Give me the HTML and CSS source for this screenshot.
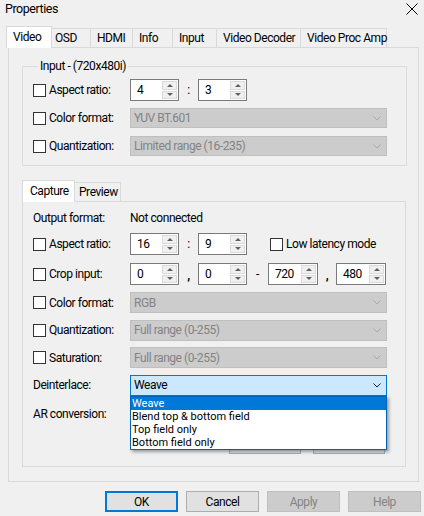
FILE: index.html
```html
<!DOCTYPE html>
<html>
<head>
<meta charset="utf-8">
<link rel="stylesheet" href="styles.css">
</head>
<body>
<div class="titlebar">
  <span class="title">Properties</span>
  <svg class="close" viewBox="0 0 12 12"><path d="M0.5 0.5L11.5 11.5M11.5 0.5L0.5 11.5" stroke="#000" stroke-width="1"/></svg>
</div>
<div class="tabs outer-tabs">
  <div class="tab sel w-video">Video</div>
  <div class="tab w-osd">OSD</div>
  <div class="tab w-hdmi">HDMI</div>
  <div class="tab w-info">Info</div>
  <div class="tab w-input">Input</div>
  <div class="tab w-vd">Video Decoder</div>
  <div class="tab w-vpa">Video Proc Amp</div>
</div>
<div class="page">
  <fieldset class="group">
    <legend>Input - (720x480i)</legend>
    <div class="row h22">
      <div class="lab"><span class="cb"></span>Aspect ratio:</div>
      <div class="spin"><span class="val">4</span><span class="ud"><i class="up"></i><i class="dn"></i></span></div>
      <span class="sep s19">:</span>
      <div class="spin"><span class="val">3</span><span class="ud"><i class="up"></i><i class="dn"></i></span></div>
    </div>
    <div class="row h20 mt7">
      <div class="lab"><span class="cb"></span>Color format:</div>
      <div class="combo dis h20"><span>YUV BT.601</span><svg class="chev" viewBox="0 0 8 5"><path d="M0.5 0.5L4 4L7.5 0.5" fill="none" stroke="#a8a8a8"/></svg></div>
    </div>
    <div class="row h20 mt8">
      <div class="lab"><span class="cb"></span>Quantization:</div>
      <div class="combo dis h20"><span>Limited range (16-235)</span><svg class="chev" viewBox="0 0 8 5"><path d="M0.5 0.5L4 4L7.5 0.5" fill="none" stroke="#a8a8a8"/></svg></div>
    </div>
  </fieldset>

  <div class="inner">
    <div class="tabs inner-tabs">
      <div class="tab sel w-cap">Capture</div>
      <div class="tab w-prev">Preview</div>
    </div>
    <div class="sub">
      <div class="row h14">
        <div class="lab nocb">Output format:</div>
        <span>Not connected</span>
      </div>
      <div class="row h22 mt8">
        <div class="lab"><span class="cb"></span>Aspect ratio:</div>
        <div class="spin"><span class="val">16</span><span class="ud"><i class="up"></i><i class="dn"></i></span></div>
        <span class="sep s19">:</span>
        <div class="spin"><span class="val">9</span><span class="ud"><i class="up"></i><i class="dn"></i></span></div>
        <div class="lab lowlat"><span class="cb"></span>Low latency mode</div>
      </div>
      <div class="row h22 mt8">
        <div class="lab"><span class="cb"></span>Crop input:</div>
        <div class="spin"><span class="val">0</span><span class="ud"><i class="up"></i><i class="dn"></i></span></div>
        <span class="sep s19 comma">,</span>
        <div class="spin"><span class="val">0</span><span class="ud"><i class="up"></i><i class="dn"></i></span></div>
        <span class="sep s21">-</span>
        <div class="spin w50"><span class="val">720</span><span class="ud"><i class="up"></i><i class="dn"></i></span></div>
        <span class="sep s18 comma">,</span>
        <div class="spin w50"><span class="val">480</span><span class="ud"><i class="up"></i><i class="dn"></i></span></div>
      </div>
      <div class="row h21 mt7">
        <div class="lab"><span class="cb"></span>Color format:</div>
        <div class="combo dis"><span>RGB</span><svg class="chev" viewBox="0 0 8 5"><path d="M0.5 0.5L4 4L7.5 0.5" fill="none" stroke="#a8a8a8"/></svg></div>
      </div>
      <div class="row h21 mt67">
        <div class="lab"><span class="cb"></span>Quantization:</div>
        <div class="combo dis"><span>Full range (0-255)</span><svg class="chev" viewBox="0 0 8 5"><path d="M0.5 0.5L4 4L7.5 0.5" fill="none" stroke="#a8a8a8"/></svg></div>
      </div>
      <div class="row h21 mt67">
        <div class="lab"><span class="cb"></span>Saturation:</div>
        <div class="combo dis"><span>Full range (0-255)</span><svg class="chev" viewBox="0 0 8 5"><path d="M0.5 0.5L4 4L7.5 0.5" fill="none" stroke="#a8a8a8"/></svg></div>
      </div>
      <div class="row h21 mt67">
        <div class="lab nocb">Deinterlace:</div>
        <div class="combo act"><span>Weave</span><svg class="chev" viewBox="0 0 8 5"><path d="M0.5 0.5L4 4L7.5 0.5" fill="none" stroke="#222"/></svg>
          <div class="pop">
            <div class="item hi">Weave</div>
            <div class="item">Blend top &amp; bottom field</div>
            <div class="item">Top field only</div>
            <div class="item">Bottom field only</div>
          </div>
        </div>
      </div>
      <div class="row h21 mt8">
        <div class="lab nocb">AR conversion:</div>
      </div>
      <div class="row h21 mt8 hidbtns">
        <div class="btn small"></div>
        <div class="btn small"></div>
      </div>
    </div>
  </div>
</div>
<div class="buttons">
  <div class="btn def">OK</div>
  <div class="btn">Cancel</div>
  <div class="btn dis">Apply</div>
  <div class="btn dis">Help</div>
</div>
</body>
</html>
```

FILE: styles.css
```css
* { box-sizing: border-box; }
html, body { margin: 0; padding: 0; }
body {
  width: 424px;
  height: 516px;
  overflow: hidden;
  background: #f0f0f0;
  font-family: Roboto, "Liberation Sans", sans-serif;
  font-size: 12px;
  letter-spacing: -0.45px;
  color: #000;
}

.titlebar {
  height: 26px;
  display: flex;
  justify-content: space-between;
  align-items: flex-start;
  padding: 1px 6px 0 5px;
}
.title { font-size: 12.5px; line-height: 15px; }
.close { width: 12px; height: 12px; margin-top: 2px; }

.tabs { display: flex; align-items: flex-end; height: 21px; }
.outer-tabs { padding-left: 6px; }
.inner-tabs { height: 22px; }

.tab {
  height: 19px;
  border: 1px solid #d9d9d9;
  border-left: none;
  border-bottom: none;
  background: #f0f0f0;
  padding-left: 6px;
  padding-top: 1px;
  line-height: 17px;
  white-space: nowrap;
}
.tab.sel {
  height: 22px;
  margin-bottom: -1px;
  border-left: 1px solid #d9d9d9;
  background: #fff;
  position: relative;
  z-index: 1;
  line-height: 18px;
}
.w-video { width: 46px; }
.w-osd { width: 39px; padding-left: 3px; }
.w-hdmi { width: 42px; }
.w-info { width: 40px; }
.w-input { width: 44px; }
.w-vd { width: 84px; }
.w-vpa { width: 86px; }
.w-cap { width: 53px; padding-left: 7px; }
.w-prev { width: 46px; padding-left: 4px; }

.page {
  margin-left: 8px;
  width: 411px;
  height: 435px;
  border: 1px solid #d9d9d9;
  background: #f0f0f0;
  padding-top: 11px;
  padding-left: 13px;
}

.group {
  margin: 0;
  width: 385px;
  border: 1px solid #dcdcdc;
  padding: 6px 0 9px 10px;
  min-width: 0;
}
.group legend {
  padding: 0 2px;
  margin-left: 5px;
  line-height: 14px;
}

.row { display: flex; align-items: center; }
.h14 { height: 14px; }
.h20 { height: 20px; }
.h21 { height: 21px; }
.h22 { height: 22px; }
.mt7 { margin-top: 7px; }
.mt8 { margin-top: 8px; }
.mt67 { margin-top: 6.67px; }

.lab { width: 97px; flex: none; display: flex; align-items: center; white-space: nowrap; }
.lab.lowlat { width: auto; margin-left: 23px; }
.cb {
  width: 13px; height: 13px; flex: none;
  border: 1px solid #333;
  background: #fff;
  margin-right: 3px;
}

.spin {
  width: 49px; height: 22px; flex: none;
  display: flex;
  border: 1px solid #7a7a7a;
  background: #fff;
}
.spin.w50 { width: 50px; }
.val { flex: 1; padding: 3px 0 0 6px; line-height: 14px; }
.ud {
  width: 16px; flex: none;
  display: flex; flex-direction: column;
  padding: 1px 1px 1px 0;
  gap: 1px;
  background: #fff;
}
.ud i {
  flex: 1;
  border: 1px solid #dadada;
  background: #f0f0f0;
  display: flex; align-items: center; justify-content: center;
}
.ud .up::before {
  content: "";
  border-left: 3px solid transparent;
  border-right: 3px solid transparent;
  border-bottom: 3px solid #606060;
}
.ud .dn::before {
  content: "";
  border-left: 3px solid transparent;
  border-right: 3px solid transparent;
  border-top: 3px solid #606060;
}

.sep { flex: none; text-align: center; }
.s18 { width: 18px; }
.s19 { width: 19px; }
.s21 { width: 21px; }
.comma { padding-top: 4px; font-weight: bold; }

.combo {
  width: 257px; height: 21px; flex: none;
  display: flex; align-items: center; justify-content: space-between;
  padding: 0 5px 0 3px;
  border: 1px solid #bfbfbf;
  position: relative;
}
.combo.h20 { height: 20px; }
.combo.dis { background: #cccccc; color: #838383; }
.combo.act { background: #cce8ff; border-color: #0078d7; }
.chev { width: 8px; height: 5px; }

.pop {
  position: absolute;
  top: 20px;
  left: -1px;
  width: 257px;
  border: 1px solid #0063b1;
  background: #fff;
  box-shadow: 2px 2px 3px rgba(0, 0, 0, 0.35);
  z-index: 5;
}
.item {
  height: 13px;
  line-height: 13px;
  padding-left: 1px;
  white-space: nowrap;
  font-size: 11px;
  letter-spacing: 0;
  overflow: hidden;
}
.item.hi { background: #0078d7; color: #fff; }

.inner { margin-top: 13px; width: 384px; }
.sub {
  width: 384px;
  height: 266px;
  border: 1px solid #d9d9d9;
  background: #f0f0f0;
  padding: 9px 0 0 10px;
  display: flex;
  flex-direction: column;
}

.hidbtns { padding-left: 196px; gap: 12px; }
.btn {
  width: 73px; height: 21px; flex: none;
  border: 1px solid #adadad;
  background: #e1e1e1;
  display: flex; align-items: center; justify-content: center;
}
.btn.small { width: 72px; }
.btn.def { border: 2px solid #0078d7; }
.btn.dis { background: #cccccc; border-color: #bfbfbf; color: #838383; }

.buttons {
  display: flex;
  justify-content: flex-end;
  gap: 8px;
  padding-right: 3px;
  margin-top: 9px;
}
```
